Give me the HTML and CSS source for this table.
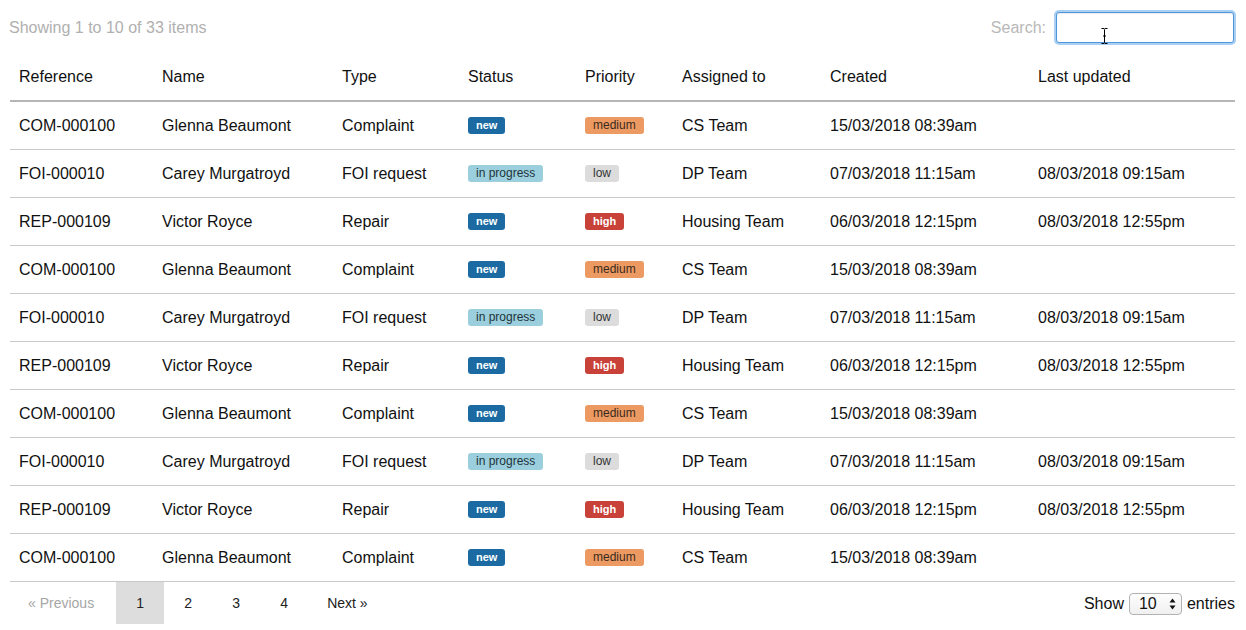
FILE: index.html
```html
<!DOCTYPE html>
<html>
<head>
<meta charset="utf-8">
<link rel="stylesheet" href="styles.css">
</head>
<body>
<div class="wrap">
  <div class="topbar">
    <div class="info">Showing 1 to 10 of 33 items</div>
    <label class="search">Search:
      <span class="search-box">
        <input type="text" class="search-input">
        <svg class="ibeam" width="7" height="16" viewBox="0 0 7 16"><path d="M0.5 0.5h2.5l0.5 0.8l0.5-0.8h2.5M3.5 1.5v13M0.5 15.5h2.5l0.5-0.8l0.5 0.8h2.5M2 8h3" stroke="#000" stroke-width="1" fill="none"/></svg>
      </span>
    </label>
  </div>
  <table class="grid">
    <colgroup>
      <col class="c-ref"><col class="c-name"><col class="c-type"><col class="c-status"><col class="c-prio"><col class="c-assign"><col class="c-created"><col class="c-updated">
    </colgroup>
    <thead>
      <tr><th>Reference</th><th>Name</th><th>Type</th><th>Status</th><th>Priority</th><th>Assigned to</th><th>Created</th><th>Last updated</th></tr>
    </thead>
    <tbody>
      <tr><td>COM-000100</td><td>Glenna Beaumont</td><td>Complaint</td><td><span class="badge b-new">new</span></td><td><span class="badge b-medium">medium</span></td><td>CS Team</td><td>15/03/2018 08:39am</td><td></td></tr>
      <tr><td>FOI-000010</td><td>Carey Murgatroyd</td><td>FOI request</td><td><span class="badge b-progress">in progress</span></td><td><span class="badge b-low">low</span></td><td>DP Team</td><td>07/03/2018 11:15am</td><td>08/03/2018 09:15am</td></tr>
      <tr><td>REP-000109</td><td>Victor Royce</td><td>Repair</td><td><span class="badge b-new">new</span></td><td><span class="badge b-high">high</span></td><td>Housing Team</td><td>06/03/2018 12:15pm</td><td>08/03/2018 12:55pm</td></tr>
      <tr><td>COM-000100</td><td>Glenna Beaumont</td><td>Complaint</td><td><span class="badge b-new">new</span></td><td><span class="badge b-medium">medium</span></td><td>CS Team</td><td>15/03/2018 08:39am</td><td></td></tr>
      <tr><td>FOI-000010</td><td>Carey Murgatroyd</td><td>FOI request</td><td><span class="badge b-progress">in progress</span></td><td><span class="badge b-low">low</span></td><td>DP Team</td><td>07/03/2018 11:15am</td><td>08/03/2018 09:15am</td></tr>
      <tr><td>REP-000109</td><td>Victor Royce</td><td>Repair</td><td><span class="badge b-new">new</span></td><td><span class="badge b-high">high</span></td><td>Housing Team</td><td>06/03/2018 12:15pm</td><td>08/03/2018 12:55pm</td></tr>
      <tr><td>COM-000100</td><td>Glenna Beaumont</td><td>Complaint</td><td><span class="badge b-new">new</span></td><td><span class="badge b-medium">medium</span></td><td>CS Team</td><td>15/03/2018 08:39am</td><td></td></tr>
      <tr><td>FOI-000010</td><td>Carey Murgatroyd</td><td>FOI request</td><td><span class="badge b-progress">in progress</span></td><td><span class="badge b-low">low</span></td><td>DP Team</td><td>07/03/2018 11:15am</td><td>08/03/2018 09:15am</td></tr>
      <tr><td>REP-000109</td><td>Victor Royce</td><td>Repair</td><td><span class="badge b-new">new</span></td><td><span class="badge b-high">high</span></td><td>Housing Team</td><td>06/03/2018 12:15pm</td><td>08/03/2018 12:55pm</td></tr>
      <tr><td>COM-000100</td><td>Glenna Beaumont</td><td>Complaint</td><td><span class="badge b-new">new</span></td><td><span class="badge b-medium">medium</span></td><td>CS Team</td><td>15/03/2018 08:39am</td><td></td></tr>
    </tbody>
  </table>
  <div class="footer">
    <div class="pager">
      <span class="pg pg-prev disabled">« Previous</span>
      <span class="pg active">1</span>
      <span class="pg">2</span>
      <span class="pg">3</span>
      <span class="pg">4</span>
      <span class="pg pg-next">Next »</span>
    </div>
    <div class="length">Show
      <span class="select"><span class="sel-val">10</span>
        <svg class="sel-arrows" width="7" height="12" viewBox="0 0 7 12"><path d="M3.5 0.5L6.5 4.5H0.5Z M3.5 11.5L6.5 7.5H0.5Z" fill="#111"/></svg>
      </span>
      entries</div>
  </div>
</div>
</body>
</html>
```
FILE: styles.css
```css
html, body {
  margin: 0;
  padding: 0;
  background: #fff;
}
body {
  font-family: "Liberation Sans", Arial, Helvetica, sans-serif;
  color: #1a1a1a;
  font-size: 16px;
}
.wrap {
  margin: 0 11px 0 10px;
}
.topbar {
  height: 52px;
  display: flex;
  align-items: flex-start;
  justify-content: space-between;
}
.info {
  color: #b0b0b0;
  font-size: 16px;
  margin-top: 19px;
  margin-left: -1px;
}
.search {
  color: #b8b8b8;
  font-size: 16px;
  display: flex;
  align-items: center;
  gap: 10px;
  margin-top: 12px;
  margin-right: 1px;
}
.search-box {
  position: relative;
  display: block;
}
.search-input {
  display: block;
  box-sizing: border-box;
  width: 178px;
  height: 31px;
  margin: 0;
  border: 1px solid #4f97dc;
  border-radius: 3px;
  box-shadow: 0 0 0 2px #a9cff2, inset 0 1px 1px rgba(0,0,0,0.08);
  outline: none;
  background: #fff;
}
.ibeam {
  position: absolute;
  left: 45px;
  top: 16px;
}
.grid {
  width: 100%;
  border-collapse: collapse;
  table-layout: fixed;
}
.c-ref { width: 143px; }
.c-name { width: 180px; }
.c-type { width: 126px; }
.c-status { width: 117px; }
.c-prio { width: 97px; }
.c-assign { width: 148px; }
.c-created { width: 208px; }
.c-updated { width: auto; }
.grid th {
  text-align: left;
  font-weight: normal;
  height: 46px;
  padding: 2px 9px 0;
  border-bottom: 2px solid #b5b5b5;
  color: #111;
  white-space: nowrap;
}
.grid td {
  height: 47px;
  padding: 0 9px;
  border-bottom: 1px solid #c8c8c8;
  color: #111;
  white-space: nowrap;
}
.badge {
  display: inline-block;
  font-size: 12px;
  line-height: 17px;
  height: 17px;
  padding: 0 8px;
  border-radius: 3px;
  vertical-align: middle;
  position: relative;
  top: -1px;
}
.b-new { background: #1b6aa1; color: #fff; font-weight: bold; font-size: 11px; }
.b-medium { background: #ec9a62; color: #3a2a20; }
.b-progress { background: #9bcfdd; color: #22343a; }
.b-low { background: #dcdcdc; color: #333; }
.b-high { background: #c9423a; color: #fff; font-weight: bold; font-size: 11px; }
.footer {
  display: flex;
  justify-content: space-between;
  align-items: center;
}
.pager {
  display: flex;
  height: 42px;
}
.pg {
  display: flex;
  align-items: center;
  justify-content: center;
  width: 48px;
  font-size: 14px;
  color: #222;
}
.pg-prev {
  width: auto;
  padding: 0 20px 0 18px;
  margin-left: 0;
}
.pg-next {
  width: auto;
  padding: 0 19px;
}
.disabled {
  color: #a6a6a6;
}
.active {
  background: #dddddd;
  margin-left: 2px;
}
.length {
  display: flex;
  align-items: center;
  gap: 5px;
  font-size: 16px;
  color: #111;
  margin-top: 1px;
}
.select {
  box-sizing: border-box;
  display: flex;
  align-items: center;
  justify-content: space-between;
  width: 53px;
  height: 22px;
  padding: 0 5px 0 9px;
  border: 1px solid #b3b3b3;
  border-radius: 4px;
  background: linear-gradient(#fdfdfd, #f0f0f0);
  font-size: 16px;
}
```
